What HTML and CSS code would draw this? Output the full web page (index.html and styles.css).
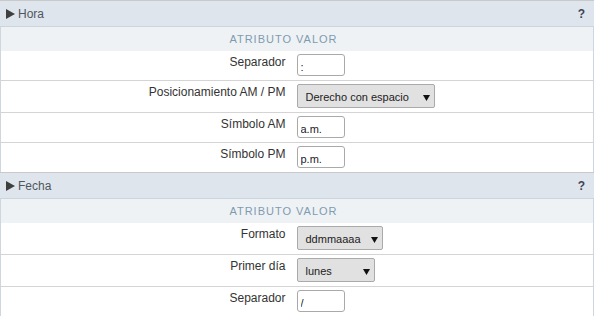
FILE: index.html
```html
<!DOCTYPE html>
<html lang="es">
<head>
<meta charset="utf-8">
<title>Configuración regional</title>
<link rel="stylesheet" href="styles.css">
</head>
<body>
<div class="block">
  <div class="bar">
    <svg class="tri" width="9" height="10" viewBox="0 0 9 10"><path d="M0 0 L9 5 L0 10 Z" fill="#3f3f3f"/></svg>
    <span class="bar-title">Hora</span>
    <span class="help">?</span>
  </div>
  <table class="grid">
    <colgroup><col class="c-lbl"><col></colgroup>
    <thead><tr><th colspan="2"><span class="th-text">Atributo Valor</span></th></tr></thead>
    <tbody>
      <tr><td class="lbl">Separador</td><td class="val"><input class="txt" type="text" value=":"></td></tr>
      <tr><td class="lbl">Posicionamiento AM / PM</td><td class="val"><span class="sel w-lg"><span>Derecho con espacio</span><svg width="7" height="7" viewBox="0 0 7 7"><path d="M0 1 L7 1 L3.5 7 Z" fill="#111"/></svg></span></td></tr>
      <tr><td class="lbl">Símbolo AM</td><td class="val"><input class="txt" type="text" value="a.m."></td></tr>
      <tr><td class="lbl">Símbolo PM</td><td class="val"><input class="txt" type="text" value="p.m."></td></tr>
    </tbody>
  </table>
  <div class="bar">
    <svg class="tri" width="9" height="10" viewBox="0 0 9 10"><path d="M0 0 L9 5 L0 10 Z" fill="#3f3f3f"/></svg>
    <span class="bar-title">Fecha</span>
    <span class="help">?</span>
  </div>
  <table class="grid">
    <colgroup><col class="c-lbl"><col></colgroup>
    <thead><tr><th colspan="2"><span class="th-text">Atributo Valor</span></th></tr></thead>
    <tbody>
      <tr><td class="lbl">Formato</td><td class="val"><span class="sel w-md"><span>ddmmaaaa</span><svg width="7" height="7" viewBox="0 0 7 7"><path d="M0 1 L7 1 L3.5 7 Z" fill="#111"/></svg></span></td></tr>
      <tr><td class="lbl">Primer día</td><td class="val"><span class="sel w-sm"><span>lunes</span><svg width="7" height="7" viewBox="0 0 7 7"><path d="M0 1 L7 1 L3.5 7 Z" fill="#111"/></svg></span></td></tr>
      <tr><td class="lbl">Separador</td><td class="val"><input class="txt" type="text" value="/"></td></tr>
    </tbody>
  </table>
</div>
</body>
</html>
```
FILE: styles.css
```css
html, body {
  margin: 0;
  padding: 0;
  background: #ffffff;
}
body {
  font-family: "Liberation Sans", Arial, sans-serif;
  font-size: 12px;
  color: #333;
}
.block {
  width: 594px;
}
.bar {
  display: flex;
  align-items: center;
  height: 25px;
  background: #dfe5ec;
  border-top: 1px solid #c9c9c9;
  border-bottom: 1px solid #cbd5de;
  padding: 0 9px 0 6px;
}
.tri {
  display: block;
  flex: none;
}
.bar-title {
  margin-left: 3px;
  color: #4f5660;
  font-size: 12px;
}
.help {
  margin-left: auto;
  font-weight: bold;
  font-size: 12px;
  color: #3d4556;
}
.grid {
  width: 594px;
  border-collapse: collapse;
  table-layout: fixed;
  border-left: 1px solid #cdd7df;
  border-right: 1px solid #cdd7df;
}
.c-lbl {
  width: 291px;
}
.grid th {
  height: 24px;
  padding: 0;
  background: #eef2f5;
  font-weight: normal;
  font-size: 11px;
  letter-spacing: 1px;
  text-transform: uppercase;
  color: #7e9bb0;
  text-align: center;
}
.th-text {
  display: inline-block;
  padding-right: 27px;
}
.grid td {
  vertical-align: top;
  padding: 3px 5px 4px;
  border-bottom: 1px solid #d4d4d4;
}
.grid tbody tr:last-child td {
  border-bottom: none;
}
.grid td.lbl {
  text-align: right;
  padding-right: 6px;
  padding-top: 4px;
  color: #333;
  line-height: 14px;
}
.txt {
  display: block;
  box-sizing: border-box;
  width: 48px;
  height: 22px;
  margin: 0;
  padding: 3px 3px 0;
  border: 1px solid #a9a9a9;
  border-radius: 3px;
  background: #fff;
  font-family: "Liberation Sans", Arial, sans-serif;
  font-size: 11px;
  color: #222;
}
.sel {
  display: flex;
  align-items: center;
  justify-content: space-between;
  box-sizing: border-box;
  height: 24px;
  padding: 2px 4px 0 8px;
  border: 1px solid #aaa;
  border-radius: 2px;
  background: #e1e1e1;
  font-size: 11px;
  color: #222;
}
.w-lg { width: 138px; }
.w-md { width: 86px; }
.w-sm { width: 78px; }
```
